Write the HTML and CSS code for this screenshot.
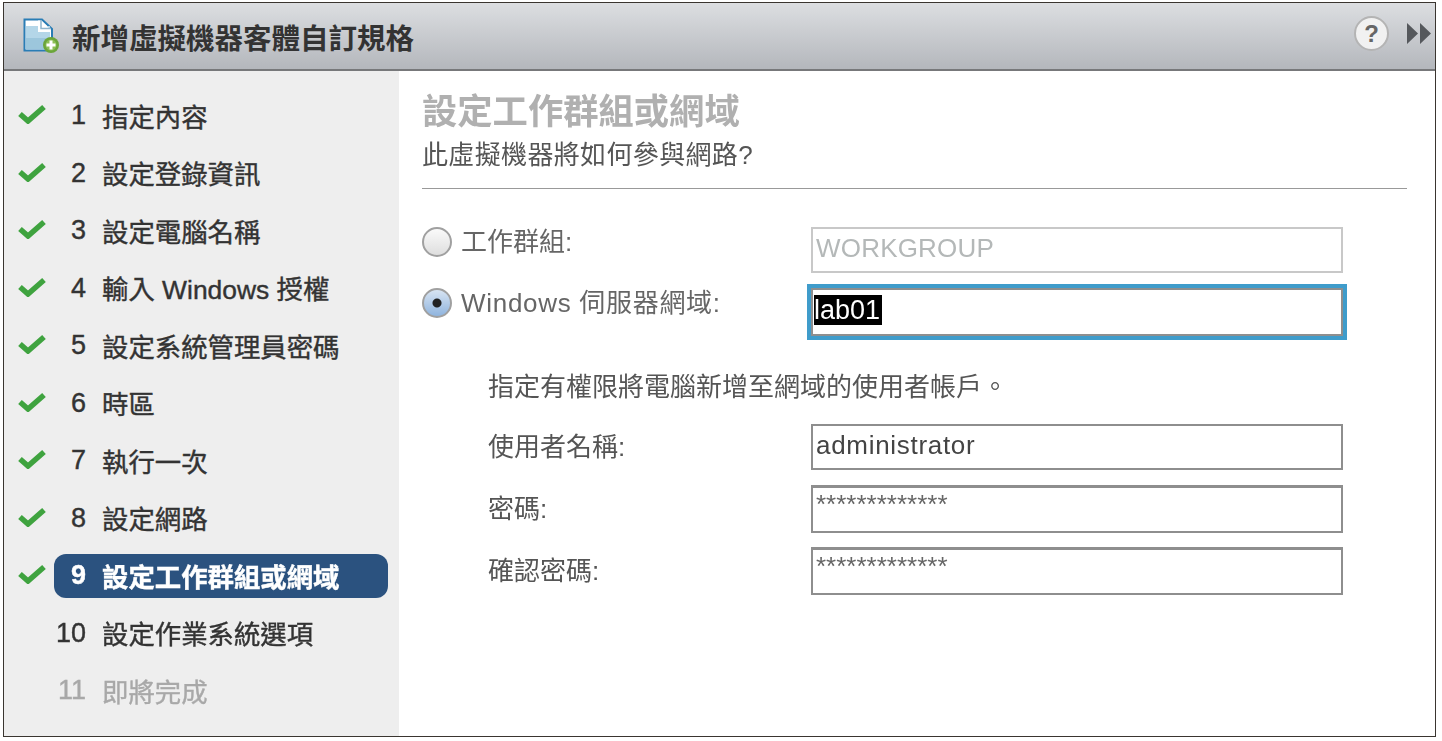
FILE: index.html
```html
<!DOCTYPE html>
<html lang="zh-Hant">

<head>
    <meta charset="UTF-8">
    <title>新增虛擬機器客體自訂規格</title>
    <link rel="stylesheet" href="styles.css">
</head>

<body>
    <div class="window">
        <div class="header">
            <svg class="doc-icon" width="37" height="35" viewBox="0 0 37 35">
                <path d="M1.5 1.5H19L29 11V32.5H1.5Z" fill="#fff" stroke="#2a7db5" stroke-width="2" />
                <rect x="3" y="8" width="24" height="23" fill="#b4d6e8" />
                <rect x="3" y="20" width="24" height="11" fill="#9cc6dc" />
                <path d="M15 2.5H18L28 12V14H15Z" fill="#fff" />
                <path d="M18 2V10.5H28" fill="none" stroke="#8fb4cc" stroke-width="1.5" />
                <circle cx="28" cy="27" r="8" fill="#6ba53a" />
                <circle cx="28" cy="27" r="5.5" fill="#8cbf55" />
                <path d="M28 22.5V31.5M23.5 27H32.5" stroke="#fff" stroke-width="3" />
            </svg>
            <div class="header-title">新增虛擬機器客體自訂規格</div>
            <div class="help">?</div>
            <svg class="more-icon" width="25" height="21" viewBox="0 0 25 21">
                <path d="M0 0L11 10.5L0 21ZM13 0L24 10.5L13 21Z" fill="#55585c" />
            </svg>
        </div>

        <div class="content">
            <ul class="steps">
                <li class="step"><svg class="check" viewBox="0 0 28 20"><path d="M2 10L10 17L26 3" /></svg><div class="step-box"><span class="num">1</span><span class="step-name">指定內容</span></div></li>
                <li class="step"><svg class="check" viewBox="0 0 28 20"><path d="M2 10L10 17L26 3" /></svg><div class="step-box"><span class="num">2</span><span class="step-name">設定登錄資訊</span></div></li>
                <li class="step"><svg class="check" viewBox="0 0 28 20"><path d="M2 10L10 17L26 3" /></svg><div class="step-box"><span class="num">3</span><span class="step-name">設定電腦名稱</span></div></li>
                <li class="step"><svg class="check" viewBox="0 0 28 20"><path d="M2 10L10 17L26 3" /></svg><div class="step-box"><span class="num">4</span><span class="step-name">輸入 Windows 授權</span></div></li>
                <li class="step"><svg class="check" viewBox="0 0 28 20"><path d="M2 10L10 17L26 3" /></svg><div class="step-box"><span class="num">5</span><span class="step-name">設定系統管理員密碼</span></div></li>
                <li class="step"><svg class="check" viewBox="0 0 28 20"><path d="M2 10L10 17L26 3" /></svg><div class="step-box"><span class="num">6</span><span class="step-name">時區</span></div></li>
                <li class="step"><svg class="check" viewBox="0 0 28 20"><path d="M2 10L10 17L26 3" /></svg><div class="step-box"><span class="num">7</span><span class="step-name">執行一次</span></div></li>
                <li class="step"><svg class="check" viewBox="0 0 28 20"><path d="M2 10L10 17L26 3" /></svg><div class="step-box"><span class="num">8</span><span class="step-name">設定網路</span></div></li>
                <li class="step current"><svg class="check" viewBox="0 0 28 20"><path d="M2 10L10 17L26 3" /></svg><div class="step-box"><span class="num">9</span><span class="step-name">設定工作群組或網域</span></div></li>
                <li class="step no-check"><div class="step-box"><span class="num">10</span><span class="step-name">設定作業系統選項</span></div></li>
                <li class="step no-check disabled"><div class="step-box"><span class="num">11</span><span class="step-name">即將完成</span></div></li>
            </ul>

            <div class="main">
                <h1>設定工作群組或網域</h1>
                <p class="subtitle">此虛擬機器將如何參與網路?</p>
                <hr>

                <div class="form-row first">
                    <div class="choice">
                        <span class="radio"></span>
                        <span>工作群組:</span>
                    </div>
                    <div class="field disabled-field">WORKGROUP</div>
                </div>

                <div class="form-row second">
                    <div class="choice">
                        <span class="radio checked"></span>
                        <span class="choice-wide">Windows 伺服器網域:</span>
                    </div>
                    <div class="field focused"><span class="selected">lab01</span></div>
                </div>

                <div class="account">
                    <p class="account-note">指定有權限將電腦新增至網域的使用者帳戶。</p>
                    <div class="account-row">
                        <label>使用者名稱:</label>
                        <div class="field">administrator</div>
                    </div>
                    <div class="account-row">
                        <label>密碼:</label>
                        <div class="field password">*************</div>
                    </div>
                    <div class="account-row">
                        <label>確認密碼:</label>
                        <div class="field password">*************</div>
                    </div>
                </div>
            </div>
        </div>
    </div>
</body>

</html>
```

FILE: styles.css
```css
* {
    box-sizing: border-box;
}

body {
    margin: 0;
    background-color: white;
    font-family: "Liberation Sans", "Noto Sans CJK TC", sans-serif;
    font-size: 26px;
    color: #444;
}

.window {
    width: 1433px;
    height: 735px;
    margin: 2px 0 0 3px;
    border: 1px solid #3a3530;
    display: flex;
    flex-direction: column;
    filter: blur(0.6px);
}

.header {
    height: 68px;
    flex-shrink: 0;
    display: flex;
    align-items: center;
    padding: 0 3px 0 19px;
    background: linear-gradient(#dcdee1, #b4b7bc);
    border-bottom: 2px solid #77787a;
}

.doc-icon {
    margin-right: 12px;
    margin-top: -2px;
}

.header-title {
    flex: 1;
    font-size: 28.5px;
    font-weight: bold;
    color: #333;
}

.help {
    width: 35px;
    height: 35px;
    margin-right: 18px;
    margin-top: -5px;
    border: 2px solid #b4b4b4;
    border-radius: 50%;
    background-color: #f1f1f1;
    color: #666;
    font-size: 24px;
    font-weight: bold;
    line-height: 31px;
    text-align: center;
}

.more-icon {
    margin-top: -5px;
}

.content {
    flex: 1;
    display: flex;
    min-height: 0;
}

.steps {
    width: 395px;
    flex-shrink: 0;
    margin: 0;
    padding: 23px 0 0 14px;
    list-style: none;
    background-color: #eeeeee;
}

.step {
    display: flex;
    align-items: center;
    height: 44px;
    margin-bottom: 13.5px;
}

.check {
    width: 28px;
    height: 20px;
    margin-right: 8px;
    margin-top: -4px;
    flex-shrink: 0;
}

.check path {
    fill: none;
    stroke: #3fa33f;
    stroke-width: 5.5;
}

.no-check {
    padding-left: 36px;
}

.step-box {
    width: 334px;
    height: 44px;
    display: flex;
    align-items: center;
    border-radius: 12px;
    color: #333;
}

.num {
    width: 32px;
    margin-right: 16px;
    margin-top: -1px;
    text-align: right;
    font-size: 27px;
    -webkit-text-stroke: 0.4px currentColor;
}

.step-name {
    margin-top: -2px;
    font-size: 26.4px;
    -webkit-text-stroke: 0.4px currentColor;
}

.current .step-box {
    background-color: #2b527f;
    color: white;
    font-weight: bold;
}

.disabled .step-box {
    color: #a8a8a8;
}

.main {
    flex: 1;
    padding: 19px 28px 0 23px;
}

h1 {
    margin: 0;
    font-size: 35.3px;
    line-height: 44px;
    font-weight: bold;
    color: #b0b0b0;
}

.subtitle {
    margin: 4px 0 0;
    line-height: 34px;
    font-size: 26px;
    letter-spacing: 0.35px;
    color: #555;
}

hr {
    height: 1px;
    margin: 16px 0 0;
    border: none;
    background-color: #999;
}

.form-row {
    display: flex;
    align-items: flex-start;
}

.form-row.first {
    margin-top: 38px;
}

.form-row.second {
    margin-top: 15px;
}

.choice {
    width: 389px;
    display: flex;
    align-items: center;
    color: #666;
}

.first .choice {
    margin-top: -2px;
    line-height: 34px;
}

.second .choice {
    line-height: 34px;
    margin-top: -2px;
}

.choice-wide {
    letter-spacing: 0.7px;
}

.radio {
    width: 30px;
    height: 30px;
    margin-right: 9px;
    border: 2px solid #a0a0a0;
    border-radius: 50%;
    background: linear-gradient(#fafafa, #dedede);
    flex-shrink: 0;
}

.radio.checked {
    background: radial-gradient(circle, #222 0, #222 4px, transparent 5px), linear-gradient(#d8e4f2, #8fb4de);
}

.field {
    width: 532px;
    height: 46px;
    padding-left: 3px;
    border: 2px solid #8e8e8e;
    background-color: white;
    line-height: 38px;
    font-size: 26px;
    color: #444;
    white-space: nowrap;
}

.disabled-field {
    border-color: #c8c8c8;
    color: #b4b8b8;
    letter-spacing: 0.2px;
}

.focused {
    height: 48px;
    padding-left: 1px;
    outline: 4px solid #3f9ccb;
    color: white;
    line-height: 40px;
}

.selected {
    display: inline-block;
    padding-right: 2px;
    background-color: black;
    font-size: 27px;
    line-height: 30px;
}

.account {
    margin-left: 66px;
}

.account-note {
    margin: 33px 0 0;
    line-height: 36px;
    color: #555;
}

.account-row {
    display: flex;
    align-items: center;
    margin-top: 14px;
}

.account-row:nth-of-type(1) {
    margin-top: 19px;
}

.account-row:nth-of-type(2) {
    margin-top: 15px;
}

.account-row label {
    width: 323px;
    margin-top: -5px;
    color: #555;
}

.account-row .field {
    letter-spacing: 0.7px;
}

.account-row .password {
    height: 48px;
    border-top-width: 3px;
    line-height: 32px;
    letter-spacing: 0;
    color: #666;
}
```
